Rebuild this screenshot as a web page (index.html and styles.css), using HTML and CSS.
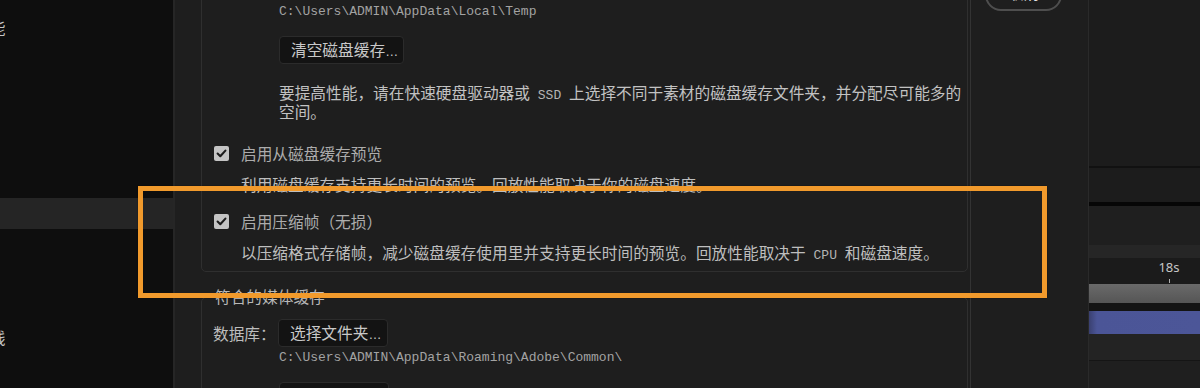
FILE: index.html
```html
<!DOCTYPE html>
<html lang="zh-CN">
<head>
<meta charset="utf-8">
<title>首选项 - 媒体和磁盘缓存</title>
<link rel="stylesheet" href="styles.css">
</head>
<body>
<div class="app">
  <nav class="sidebar">
    <div class="nav-item"><span>内存与性能</span></div>
    <div class="nav-item"></div>
    <div class="nav-item"></div>
    <div class="nav-item"></div>
    <div class="nav-item"></div>
    <div class="nav-item"></div>
    <div class="nav-item active"></div>
    <div class="nav-item"></div>
    <div class="nav-item"></div>
    <div class="nav-item"></div>
    <div class="nav-item"><span>网格参考线</span></div>
  </nav>

  <main class="content">
    <div class="scroller">
      <section class="group">
        <div class="indent row-hidden"></div>
        <div class="indent path">C:\Users\ADMIN\AppData\Local\Temp</div>
        <div class="indent clear-row">
          <button class="btn btn-clear">清空磁盘缓存<span class="ell">…</span></button>
        </div>
        <p class="indent para">要提高性能，请在快速硬盘驱动器或<span class="mono"> SSD </span>上选择不同于素材的磁盘缓存文件夹，并分配尽可能多的空间。</p>

        <label class="check-row first">
          <span class="checkbox"><svg viewBox="0 0 15 15" width="15" height="15"><path d="M3.6 7.6 L6.3 10.2 L11.4 4.6" fill="none" stroke="#1c1c1c" stroke-width="2.1" stroke-linecap="round" stroke-linejoin="round"/></svg></span>
          <span class="check-label">启用从磁盘缓存预览</span>
        </label>
        <p class="desc">利用磁盘缓存支持更长时间的预览。回放性能取决于你的磁盘速度。</p>

        <label class="check-row second">
          <span class="checkbox"><svg viewBox="0 0 15 15" width="15" height="15"><path d="M3.6 7.6 L6.3 10.2 L11.4 4.6" fill="none" stroke="#1c1c1c" stroke-width="2.1" stroke-linecap="round" stroke-linejoin="round"/></svg></span>
          <span class="check-label">启用压缩帧（无损）</span>
        </label>
        <p class="desc">以压缩格式存储帧，减少磁盘缓存使用里并支持更长时间的预览。回放性能取决于<span class="mono"> CPU </span>和磁盘速度。</p>
      </section>

      <section class="group group-media">
        <div class="legend">符合的媒体缓存</div>
        <div class="field-row">
          <span class="field-label">数据库：</span>
          <button class="btn btn-folder">选择文件夹<span class="ell">…</span></button>
        </div>
        <div class="indent path path2">C:\Users\ADMIN\AppData\Roaming\Adobe\Common\</div>
        <div class="indent next-row">
          <button class="btn btn-folder">选择文件夹<span class="ell">…</span></button>
        </div>
      </section>
    </div>
  </main>

  <aside class="actions">
    <button class="pill">取消</button>
  </aside>

  <div class="timeline">
    <div class="tl-seg tl-a"></div>
    <div class="tl-line"></div>
    <div class="tl-seg tl-b"></div>
    <div class="tl-black"></div>
    <div class="tl-seg tl-c"></div>
    <div class="tl-strip"></div>
    <div class="tl-ruler">
      <div class="tick-mark">
        <span class="tick-label">18s</span>
        <span class="tick"></span>
      </div>
    </div>
    <div class="tl-work"></div>
    <div class="tl-gap"></div>
    <div class="tl-layer"></div>
    <div class="tl-row"></div>
    <div class="tl-row2"></div>
  </div>
</div>

<div class="highlight"></div>
</body>
</html>
```

FILE: styles.css
```css
* {
  box-sizing: border-box;
  margin: 0;
  padding: 0;
}

html, body {
  width: 1200px;
  height: 388px;
  overflow: hidden;
  background: #1e1e1e;
}

body {
  position: relative;
  font-family: "Noto Sans CJK SC", "Noto Sans", sans-serif;
  font-size: 15.7px;
  line-height: 19px;
  color: #bdbdbd;
}

.app {
  display: flex;
  height: 388px;
}

/* ---------- sidebar ---------- */
.sidebar {
  flex: 0 0 175px;
  background: #0e0e0e;
  border-right: 2px solid #262626;
  padding-top: 12px;
  overflow: hidden;
}

.nav-item {
  height: 31px;
  display: flex;
  align-items: center;
  white-space: nowrap;
}

.nav-item span {
  margin-left: -73px;
  color: #c4c4c4;
}

.nav-item.active {
  background: #252525;
}

/* ---------- content ---------- */
.content {
  flex: 0 0 796px;
  padding: 0 2px 0 26px;
  border-right: 1px solid #333333;
  overflow: hidden;
}

.scroller {
  margin-top: -40px;
}

.group {
  border: 1px solid #2f2f2f;
  border-radius: 5px;
  padding: 0 0 9px 12px;
}

.indent {
  margin-left: 65px;
}

.row-hidden {
  height: 28px;
  margin-bottom: 14px;
}

.path {
  font-family: "Liberation Mono", "DejaVu Sans Mono", monospace;
  font-size: 13px;
  line-height: 17px;
  height: 17px;
  color: #a3a3a3;
  white-space: nowrap;
}

.clear-row {
  margin-top: 16px;
  height: 28px;
}

.btn {
  display: block;
  height: 28px;
  padding: 0 0 0 11px;
  text-align: left;
  background: #131313;
  border: 1px solid #2b2b2b;
  border-radius: 4px;
  color: #c8c8c8;
  font-family: inherit;
  font-size: 15.7px;
  line-height: 26px;
  white-space: nowrap;
  overflow: hidden;
}

.ell {
  font-family: "Liberation Sans", sans-serif;
  font-size: 13px;
  line-height: 10px;
}

.btn-clear {
  width: 125px;
}

.btn-folder {
  width: 110px;
}

.para {
  margin-top: 19px;
  max-width: 686px;
  color: #c2c2c2;
}

.mono {
  font-family: "Liberation Mono", "DejaVu Sans Mono", monospace;
  font-size: 13px;
  line-height: 10px;
  color: #b4b4b4;
}

.check-row {
  display: flex;
  align-items: center;
  gap: 12px;
  height: 20px;
}

.check-row.first {
  margin-top: 22px;
}

.check-row.second {
  margin-top: 17px;
}

.checkbox {
  width: 15px;
  height: 15px;
  background: #c4c4c4;
  border-radius: 2px;
  display: flex;
}

.check-label {
  color: #acacac;
}

.desc {
  margin-top: 12px;
  margin-left: 27px;
  color: #bebebe;
  white-space: nowrap;
}

.group-media {
  margin-top: 25px;
  padding-bottom: 40px;
}

.legend {
  margin-top: -11px;
  margin-left: -2px;
  padding: 0 4px 0 3px;
  width: fit-content;
  background: #1e1e1e;
  color: #b8b8b8;
}

.field-row {
  display: flex;
  align-items: center;
  margin-top: 13px;
  height: 28px;
}

.field-label {
  width: 65px;
  margin-left: -1px;
  color: #bdbdbd;
}

.path2 {
  margin-top: 2px;
}

.next-row {
  margin-top: 16px;
}

/* ---------- action column ---------- */
.actions {
  flex: 0 0 118px;
  border-right: 1px solid #2a2a2a;
  padding-left: 14px;
  overflow: hidden;
}

.pill {
  display: block;
  margin-top: -25px;
  width: 77px;
  height: 36px;
  border: 2px solid #4e4e4e;
  border-radius: 16px;
  background: #1e1e1e;
  color: #e6e6e6;
  font-family: inherit;
  font-size: 15.7px;
  line-height: 28px;
}

/* ---------- timeline ---------- */
.timeline {
  flex: 1 1 auto;
  display: flex;
  flex-direction: column;
  background: #1b1b1b;
  overflow: hidden;
}

.tl-a { height: 166px; background: #1c1c1c; }
.tl-line { height: 2px; background: #111111; }
.tl-b { height: 34px; background: #1c1c1c; }
.tl-black { height: 4px; background: #060606; }
.tl-c { height: 39px; background: #1f1f1f; }
.tl-strip { height: 13px; background: #262626; }

.tl-ruler {
  height: 26px;
  background: #1b1b1b;
  padding-left: 69px;
}

.tick-mark {
  width: 22px;
  display: flex;
  flex-direction: column;
  align-items: center;
}

.tick-label {
  font-family: "Noto Sans", "Liberation Sans", sans-serif;
  font-size: 13px;
  line-height: 16px;
  margin-top: 1px;
  color: #c6c6c6;
}

.tick {
  width: 1px;
  height: 4px;
  margin-top: 4px;
  background: #b0b0b0;
}

.tl-work {
  height: 19px;
  background: linear-gradient(#6a6a6a, #555555);
}

.tl-gap { height: 8px; background: #141414; }

.tl-layer {
  height: 23px;
  background: linear-gradient(90deg, #3a4070 0px, #4b5597 8px, #4c5698 100%);
}

.tl-row {
  height: 27px;
  background: #232323;
  border-bottom: 1px solid #151515;
}

.tl-row2 {
  flex: 1 1 auto;
  background: #1f1f1f;
}

/* ---------- annotation overlay ---------- */
.highlight {
  position: absolute;
  left: 138px;
  top: 186px;
  width: 909px;
  height: 112px;
  border: 5px solid #f19a2c;
  box-shadow: 0 0 1px rgba(0, 0, 0, 0.6);
  pointer-events: none;
}
```
